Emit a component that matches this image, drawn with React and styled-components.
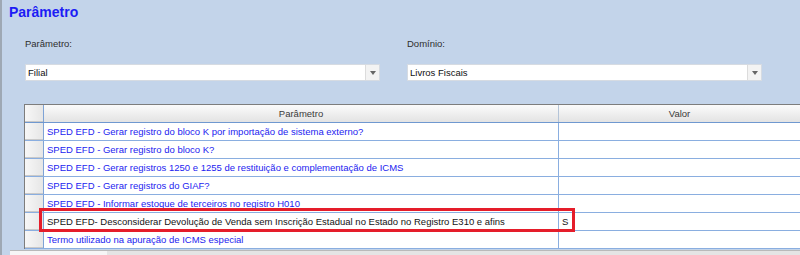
import styled, { createGlobalStyle } from 'styled-components';

const GlobalStyle = createGlobalStyle`
   html, body {
      margin: 0;
      padding: 0;
      background: #c3d4ea;
      font-family: "Liberation Sans", Arial, sans-serif;
   }
`;

const rows = [
   { label: 'SPED EFD - Gerar registro do bloco K por importação de sistema externo?', value: '' },
   { label: 'SPED EFD - Gerar registro do bloco K?', value: '' },
   { label: 'SPED EFD - Gerar registros 1250 e 1255 de restituição e complementação de ICMS', value: '' },
   { label: 'SPED EFD - Gerar registros do GIAF?', value: '' },
   { label: 'SPED EFD - Informar estoque de terceiros no registro H010', value: '' },
   { label: 'SPED EFD- Desconsiderar Devolução de Venda sem Inscrição Estadual no Estado no Registro E310 e afins', value: 'S', marked: true },
   { label: 'Termo utilizado na apuração de ICMS especial', value: '' },
];

const App = () => {
   return (
      <>
         <GlobalStyle />
         <Page>
            <Title>Parâmetro</Title>

            <Filters>
               <Field>
                  <Label>Parâmetro:</Label>
                  <Select>
                     <span>Filial</span>
                     <Arrow />
                  </Select>
               </Field>
               <Field>
                  <Label>Domínio:</Label>
                  <Select>
                     <span>Livros Fiscais</span>
                     <Arrow />
                  </Select>
               </Field>
            </Filters>

            <Grid>
               <HeaderRow>
                  <RowHead />
                  <HeadCell>Parâmetro</HeadCell>
                  <HeadCell>Valor</HeadCell>
               </HeaderRow>
               {rows.map((r) => (
                  <Row key={r.label}>
                     <RowHead />
                     <Cell $dark={r.marked}>{r.label}</Cell>
                     <Cell $dark>{r.value}</Cell>
                  </Row>
               ))}
               <Highlight />
            </Grid>

            <ScrollBar>
               <Thumb />
            </ScrollBar>
         </Page>
      </>
   );
};

const Page = styled.div`
   height: 255px;
   border-left: 2px solid #9ea8b4;
   box-sizing: border-box;
   overflow: hidden;
`;

const Title = styled.h1`
   margin: 0;
   padding: 3px 0 0 7px;
   font-size: 14px;
   line-height: 18px;
   font-weight: bold;
   color: #1c1cf5;
`;

const Filters = styled.div`
   display: grid;
   grid-template-columns: 355px 355px;
   column-gap: 27px;
   padding-left: 23px;
   margin-top: 16px;
`;

const Field = styled.div`
   display: flex;
   flex-direction: column;
`;

const Label = styled.div`
   font-size: 9.5px;
   line-height: 13px;
   color: #2e2e2e;
   margin-bottom: 14px;
`;

const Select = styled.div`
   display: flex;
   align-items: center;
   height: 17px;
   box-sizing: border-box;
   background: #fff;
   border: 1px solid #d6dbe2;
   font-size: 9.5px;
   color: #111;

   span {
      flex: 1;
      padding-left: 2px;
   }
`;

const Arrow = styled.div`
   width: 13px;
   height: 100%;
   background: #f3f3f3;
   border-left: 1px solid #dcdcdc;
   display: flex;
   align-items: center;
   justify-content: center;

   &::after {
      content: '';
      border-left: 3px solid transparent;
      border-right: 3px solid transparent;
      border-top: 4px solid #666;
   }
`;

const Grid = styled.div`
   position: relative;
   margin: 23px 0 0 22px;
   width: 775px;
   border-top: 1px solid #7d7d7d;
   border-left: 1px solid #7d7d7d;
   border-right: 1px solid #86a8d8;
   background: #fff;
`;

const HeaderRow = styled.div`
   display: grid;
   grid-template-columns: 19px 515px 1fr;
   height: 18px;
   border-bottom: 1px solid #6f98d0;
   box-sizing: border-box;
   background: linear-gradient(#fbfbfb, #e3e3e3);
`;

const Row = styled.div`
   display: grid;
   grid-template-columns: 19px 515px 1fr;
   height: 18px;
   border-bottom: 1px solid #8aaee0;
   box-sizing: border-box;
`;

const RowHead = styled.div`
   background: linear-gradient(90deg, #f7f7f7, #e6e6e6);
   border-right: 1px solid #7ea3d6;
   box-shadow: inset 0 -1px 0 #c9c9c9;
`;

const HeadCell = styled.div`
   font-size: 9.5px;
   line-height: 17px;
   text-align: center;
   color: #3a3a3a;
   border-right: 1px solid #b4c4d8;

   &:last-child {
      border-right: none;
   }
`;

const Cell = styled.div`
   font-size: 9.5px;
   line-height: 17px;
   padding-left: 3px;
   white-space: nowrap;
   overflow: hidden;
   color: ${(p) => (p.$dark ? '#141414' : '#2323f0')};
   border-right: 1px solid #8aaee0;

   &:last-child {
      border-right: none;
   }
`;

const Highlight = styled.div`
   position: absolute;
   left: 14px;
   top: 103px;
   width: 536px;
   height: 24px;
   box-sizing: border-box;
   border: 3px solid #e51d2a;
   pointer-events: none;
`;

const ScrollBar = styled.div`
   display: flex;
   margin: 1px 0 0 8px;
   height: 6px;
   background: #e4e4e4;
   border-top: 1px solid #b9b9b9;
`;

const Thumb = styled.div`
   width: 97px;
   background: #f6f6f6;
`;

export default App;
